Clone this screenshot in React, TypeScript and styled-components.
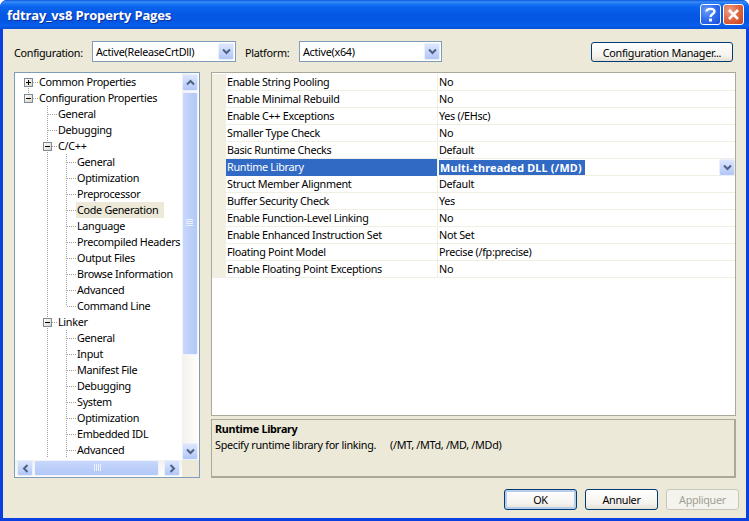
import styled, { createGlobalStyle } from "styled-components";

const GlobalStyle = createGlobalStyle`
  html, body {
    margin: 0;
    padding: 0;
    background: #fff;
  }
  body {
    font-family: "Noto Sans", "Liberation Sans", Arial, sans-serif;
    font-size: 10.8px;
    letter-spacing: -0.3px;
    color: #000;
  }
`;

const Window = styled.div`
  width: 749px;
  height: 521px;
  box-sizing: border-box;
  display: flex;
  flex-direction: column;
  background: #0a3fe0;
  border-radius: 7px 7px 0 0;
  overflow: hidden;
`;

const TitleBar = styled.div`
  height: 29px;
  flex: none;
  box-sizing: border-box;
  padding: 0 5px 0 7px;
  display: flex;
  align-items: center;
  gap: 2px;
  background: linear-gradient(
    180deg,
    #0a58e0 0,
    #3b8cf5 2px,
    #1a74f5 4px,
    #0a64ee 7px,
    #0558e4 14px,
    #0556e2 22px,
    #0560ee 25px,
    #0a50d8 29px
  );
`;

const Title = styled.div`
  flex: 1;
  font-family: "Open Sans", "Liberation Sans", sans-serif;
  font-weight: 700;
  font-size: 13px;
  letter-spacing: -0.15px;
  color: #fff;
  text-shadow: 1px 1px 0 #0f2f9c;
  margin-top: 1px;
`;

const CaptionButton = styled.div<{ $danger?: boolean }>`
  width: 21px;
  height: 21px;
  box-sizing: border-box;
  border: 1px solid #fff;
  border-radius: 3px;
  display: flex;
  align-items: center;
  justify-content: center;
  background: ${(p) =>
    p.$danger
      ? "radial-gradient(circle at 30% 30%, #f0a088 0, #e06a45 45%, #c8401c 100%)"
      : "radial-gradient(circle at 30% 30%, #6a9cf5 0, #2f6cf0 50%, #1a4bd8 100%)"};
`;

const Body = styled.div`
  flex: 1;
  margin: 0 3px 3px;
  box-sizing: border-box;
  padding: 12px 7px 8px 11px;
  background: #ece9d8;
  display: flex;
  flex-direction: column;
`;

const ConfigRow = styled.div`
  height: 21px;
  flex: none;
  display: flex;
  align-items: center;
`;

const FieldLabel = styled.div<{ $width: number }>`
  width: ${(p) => p.$width}px;
  flex: none;
  padding-top: 2px;
`;

const Select = styled.div<{ $width: number }>`
  width: ${(p) => p.$width}px;
  height: 21px;
  flex: none;
  box-sizing: border-box;
  margin-right: 9px;
  border: 1px solid #7f9db9;
  background: #fff;
  display: flex;
  align-items: center;
  justify-content: space-between;
  padding: 1px 1px 1px 3px;
`;

const ArrowBox = styled.div<{ $w?: number; $h?: number }>`
  width: ${(p) => p.$w ?? 16}px;
  height: ${(p) => p.$h ?? 17}px;
  flex: none;
  box-sizing: border-box;
  border: 1px solid #e8effd;
  border-radius: 2px;
  background: linear-gradient(180deg, #dde6fd 0%, #c3d3fa 60%, #b2c5f5 100%);
  display: flex;
  align-items: center;
  justify-content: center;
`;

const ManagerButtonSlot = styled.div`
  margin-left: auto;
  margin-right: 6px;
  padding-top: 1px;
`;

const XpButton = styled.div<{ $width: number; $height?: number; $default?: boolean; $disabled?: boolean }>`
  width: ${(p) => p.$width}px;
  height: ${(p) => p.$height ?? 21}px;
  box-sizing: border-box;
  border: 1px solid ${(p) => (p.$disabled ? "#c9c7ba" : "#003c74")};
  border-radius: 3px;
  display: flex;
  align-items: center;
  justify-content: center;
  color: ${(p) => (p.$disabled ? "#a1a192" : "#000")};
  background: ${(p) =>
    p.$disabled
      ? "#f4f3ee"
      : "linear-gradient(180deg, #fff 0%, #f4f3ee 70%, #e3e0d4 100%)"};
  box-shadow: ${(p) =>
    p.$default ? "inset 0 0 0 2px #b8cdee" : "none"};
`;

const MainRow = styled.div`
  height: 406px;
  flex: none;
  margin-top: 10px;
  display: flex;
  gap: 11px;
  padding-right: 3px;
`;

const TreePane = styled.div`
  width: 186px;
  flex: none;
  box-sizing: border-box;
  border: 1px solid #7f9db9;
  background: #fff;
  display: grid;
  grid-template-columns: 1fr 17px;
  grid-template-rows: 1fr 17px;
`;

const TreeList = styled.div`
  overflow: hidden;
  padding: 1px 0 0 4px;
  height: 386px;
  box-sizing: border-box;
`;

const TreeRow = styled.div`
  height: 16px;
  display: flex;
  align-items: center;
`;

const TreeLabel = styled.div<{ $selected?: boolean }>`
  height: 16px;
  line-height: 16px;
  padding: 0 6px 0 1px;
  white-space: nowrap;
  background: ${(p) => (p.$selected ? "#ece9d8" : "transparent")};
`;

const VScroll = styled.div`
  display: flex;
  flex-direction: column;
  align-items: flex-start;
  padding-top: 1px;
  background: linear-gradient(90deg, #f3f1ec, #fefefb);
`;

const VThumb = styled.div`
  width: 16px;
  height: 263px;
  flex: none;
  box-sizing: border-box;
  border: 1px solid #eef3fe;
  border-radius: 2px;
  background: linear-gradient(90deg, #c9d8fb, #bccffa 50%, #b4c8f6);
  margin-top: 1px;
  display: flex;
  justify-content: center;
  padding-top: 126px;
`;

const VSpacer = styled.div`
  flex: 1;
`;

const HScroll = styled.div`
  display: flex;
  align-items: flex-start;
  padding: 0 1px 0 2px;
  background: linear-gradient(180deg, #f3f1ec, #fefefb);
`;

const HThumb = styled.div`
  width: 125px;
  height: 16px;
  flex: none;
  margin-left: 1px;
  box-sizing: border-box;
  border: 1px solid #eef3fe;
  border-radius: 2px;
  background: linear-gradient(180deg, #c9d8fb, #bccffa 50%, #b4c8f6);
  display: flex;
  align-items: center;
  justify-content: center;
`;

const HSpacer = styled.div`
  width: 5px;
  flex: none;
`;

const Corner = styled.div`
  background: #ece9d8;
`;

const RightPane = styled.div`
  flex: 1;
  display: flex;
  flex-direction: column;
  gap: 3px;
`;

const GridPane = styled.div`
  height: 344px;
  flex: none;
  box-sizing: border-box;
  border: 1px solid #aca899;
  background: #fff;
  padding-top: 1px;
`;

const GridRow = styled.div`
  height: 17px;
  box-sizing: border-box;
  display: grid;
  grid-template-columns: 14px 212px 1fr;
  border-bottom: 1px solid #f1efe2;
`;

const Gutter = styled.div`
  background: #f1efe2;
  margin-bottom: -1px;
`;

const NameCell = styled.div<{ $selected?: boolean }>`
  padding-left: 1px;
  line-height: 16px;
  border-right: 1px solid #f1efe2;
  color: ${(p) => (p.$selected ? "#fff" : "#000")};
  background: ${(p) => (p.$selected ? "#316ac5" : "transparent")};
`;

const ValueCell = styled.div`
  padding-left: 1px;
  line-height: 16px;
  display: flex;
  justify-content: space-between;
  align-items: flex-start;
  white-space: nowrap;
`;

const SelectedValue = styled.span`
  width: 146px;
  box-sizing: border-box;
  background: #316ac5;
  color: #fff;
  font-weight: 700;
  letter-spacing: 0.22px;
  height: 15px;
  line-height: 15px;
  margin-top: 1px;
  padding: 0 1px;
`;

const DescPane = styled.div`
  flex: 1;
  box-sizing: border-box;
  border: 1px solid #aca899;
  border-width: 1px 2px 2px 1px;
  padding: 1px 3px;
  line-height: 16px;
`;

const DescTitle = styled.div`
  font-weight: 700;
`;

const DescText = styled.div`
  display: flex;
`;

const DescLead = styled.span`
  width: 175px;
  flex: none;
`;

const Footer = styled.div`
  margin-top: 11px;
  display: flex;
  justify-content: flex-end;
  gap: 8px;
`;

type Node = {
  label: string;
  depth: 0 | 1 | 2;
  box?: "+" | "-";
  selected?: boolean;
  last?: boolean;
};

const tree: Node[] = [
  { label: "Common Properties", depth: 0, box: "+" },
  { label: "Configuration Properties", depth: 0, box: "-", last: true },
  { label: "General", depth: 1 },
  { label: "Debugging", depth: 1 },
  { label: "C/C++", depth: 1, box: "-" },
  { label: "General", depth: 2 },
  { label: "Optimization", depth: 2 },
  { label: "Preprocessor", depth: 2 },
  { label: "Code Generation", depth: 2, selected: true },
  { label: "Language", depth: 2 },
  { label: "Precompiled Headers", depth: 2 },
  { label: "Output Files", depth: 2 },
  { label: "Browse Information", depth: 2 },
  { label: "Advanced", depth: 2 },
  { label: "Command Line", depth: 2, last: true },
  { label: "Linker", depth: 1, box: "-" },
  { label: "General", depth: 2 },
  { label: "Input", depth: 2 },
  { label: "Manifest File", depth: 2 },
  { label: "Debugging", depth: 2 },
  { label: "System", depth: 2 },
  { label: "Optimization", depth: 2 },
  { label: "Embedded IDL", depth: 2 },
  { label: "Advanced", depth: 2 },
];

const props: [string, string][] = [
  ["Enable String Pooling", "No"],
  ["Enable Minimal Rebuild", "No"],
  ["Enable C++ Exceptions", "Yes (/EHsc)"],
  ["Smaller Type Check", "No"],
  ["Basic Runtime Checks", "Default"],
  ["Runtime Library", "Multi-threaded DLL (/MD)"],
  ["Struct Member Alignment", "Default"],
  ["Buffer Security Check", "Yes"],
  ["Enable Function-Level Linking", "No"],
  ["Enable Enhanced Instruction Set", "Not Set"],
  ["Floating Point Model", "Precise (/fp:precise)"],
  ["Enable Floating Point Exceptions", "No"],
];

const dots = { stroke: "#a0a0a0", strokeWidth: 1, strokeDasharray: "1 1" };

// one 19x16 cell of the tree: dotted guides, optional +/- box
const TreeCell = ({
  up,
  down,
  branch,
  box,
}: {
  up?: boolean;
  down?: boolean;
  branch?: boolean;
  box?: "+" | "-";
}) => (
  <svg width="19" height="16" style={{ flex: "none", display: "block" }}>
    {up && <line x1="9.5" y1="0" x2="9.5" y2="8" {...dots} />}
    {down && <line x1="9.5" y1="8" x2="9.5" y2="16" {...dots} />}
    {branch && <line x1="10" y1="8.5" x2="19" y2="8.5" {...dots} />}
    {box && (
      <>
        <defs>
          <linearGradient id="boxFill" x1="0" y1="0" x2="1" y2="1">
            <stop offset="0" stopColor="#ffffff" />
            <stop offset="1" stopColor="#d8d4c4" />
          </linearGradient>
        </defs>
        <rect x="5.5" y="4.5" width="8" height="8" fill="url(#boxFill)" stroke="#7a8a99" />
        <line x1="7" y1="8.5" x2="12" y2="8.5" stroke="#000" />
        {box === "+" && <line x1="9.5" y1="6" x2="9.5" y2="11" stroke="#000" />}
      </>
    )}
  </svg>
);

const renderGuides = (n: Node) => {
  if (n.depth === 0) {
    return <TreeCell branch up={n.last} down={!n.last} box={n.box} />;
  }
  if (n.depth === 1) {
    return (
      <>
        <TreeCell />
        <TreeCell up down branch box={n.box} />
      </>
    );
  }
  return (
    <>
      <TreeCell />
      <TreeCell up down />
      <TreeCell up down={!n.last} branch />
    </>
  );
};

const Chevron = ({ dir, size = 9 }: { dir: "up" | "down" | "left" | "right"; size?: number }) => {
  const rot = { down: 0, up: 180, left: 90, right: -90 }[dir];
  return (
    <svg width={size} height={size} viewBox="0 0 9 9" style={{ transform: `rotate(${rot}deg)` }}>
      <path d="M1 2.5 L4.5 6 L8 2.5" fill="none" stroke="#4d6185" strokeWidth="2" />
    </svg>
  );
};

const Grip = ({ vertical }: { vertical?: boolean }) => (
  <svg width="8" height="8" viewBox="0 0 8 8" style={vertical ? undefined : { transform: "rotate(90deg)" }}>
    {[0, 2, 4, 6].map((y) => (
      <line key={y} x1="0" y1={y + 0.5} x2="7" y2={y + 0.5} stroke="#eef3fe" />
    ))}
  </svg>
);

export default function App() {
  return (
    <>
      <GlobalStyle />
      <Window>
        <TitleBar>
          <Title>fdtray_vs8 Property Pages</Title>
          <CaptionButton>
            <svg width="13" height="15" viewBox="0 0 13 15">
              <path
                d="M2.5 4.5 C2.5 1 10.5 1 10.5 4.5 C10.5 7 6.5 7 6.5 10"
                fill="none"
                stroke="#fff"
                strokeWidth="2.4"
              />
              <rect x="5" y="11.5" width="3" height="3" fill="#fff" />
            </svg>
          </CaptionButton>
          <CaptionButton $danger>
            <svg width="13" height="13" viewBox="0 0 13 13">
              <path d="M2 2 L11 11 M11 2 L2 11" stroke="#fff" strokeWidth="2.6" />
            </svg>
          </CaptionButton>
        </TitleBar>
        <Body>
          <ConfigRow>
            <FieldLabel $width={78}>Configuration:</FieldLabel>
            <Select $width={144}>
              Active(ReleaseCrtDll)
              <ArrowBox><Chevron dir="down" /></ArrowBox>
            </Select>
            <FieldLabel $width={54}>Platform:</FieldLabel>
            <Select $width={143}>
              Active(x64)
              <ArrowBox><Chevron dir="down" /></ArrowBox>
            </Select>
            <ManagerButtonSlot>
              <XpButton $width={142} $height={20}>Configuration Manager...</XpButton>
            </ManagerButtonSlot>
          </ConfigRow>
          <MainRow>
            <TreePane>
              <TreeList>
                {tree.map((n, i) => (
                  <TreeRow key={i}>
                    {renderGuides(n)}
                    <TreeLabel $selected={n.selected}>{n.label}</TreeLabel>
                  </TreeRow>
                ))}
              </TreeList>
              <VScroll>
                <ArrowBox><Chevron dir="up" /></ArrowBox>
                <VThumb><Grip vertical /></VThumb>
                <VSpacer />
                <ArrowBox><Chevron dir="down" /></ArrowBox>
              </VScroll>
              <HScroll>
                <ArrowBox $h={16}><Chevron dir="left" /></ArrowBox>
                <HThumb><Grip /></HThumb>
                <HSpacer />
                <ArrowBox $h={16}><Chevron dir="right" /></ArrowBox>
              </HScroll>
              <Corner />
            </TreePane>
            <RightPane>
              <GridPane>
                {props.map(([name, value], i) => {
                  const selected = name === "Runtime Library";
                  return (
                    <GridRow key={name} data-row={i}>
                      <Gutter />
                      <NameCell $selected={selected}>{name}</NameCell>
                      <ValueCell>
                        {selected ? <SelectedValue>{value}</SelectedValue> : value}
                        {selected && <ArrowBox><Chevron dir="down" /></ArrowBox>}
                      </ValueCell>
                    </GridRow>
                  );
                })}
              </GridPane>
              <DescPane>
                <DescTitle>Runtime Library</DescTitle>
                <DescText>
                  <DescLead>Specify runtime library for linking.</DescLead>
                  <span>(/MT, /MTd, /MD, /MDd)</span>
                </DescText>
              </DescPane>
            </RightPane>
          </MainRow>
          <Footer>
            <XpButton $width={73} $default>OK</XpButton>
            <XpButton $width={73}>Annuler</XpButton>
            <XpButton $width={73} $disabled>Appliquer</XpButton>
          </Footer>
        </Body>
      </Window>
    </>
  );
}
